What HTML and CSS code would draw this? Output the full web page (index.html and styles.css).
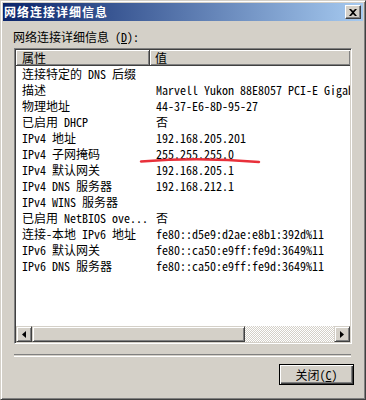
FILE: index.html
```html
<!DOCTYPE html>
<html lang="zh-CN">
<head>
    <meta charset="UTF-8">
    <title>网络连接详细信息</title>
    <link rel="stylesheet" href="styles.css">
</head>
<body>
    <div class="window">
        <div class="titlebar">
            <span class="title">网络连接详细信息</span>
            <button class="close-btn" title="关闭">
                <svg width="8" height="7" viewBox="0 0 8 7"><path d="M0 0h2l2 2 2-2h2L5 3.5 8 7H6L4 5 2 7H0l3-3.5z" fill="#000"/></svg>
            </button>
        </div>

        <div class="content">
            <div class="caption">网络连接详细信息 (<u>D</u>):</div>

            <div class="listview">
                <div class="lv-header">
                    <div class="hcell col-name">属性</div>
                    <div class="hcell col-value">值</div>
                </div>
                <div class="lv-body">
                    <div class="row"><span class="col-name">连接特定的 DNS 后缀</span><span class="col-value"></span></div>
                    <div class="row"><span class="col-name">描述</span><span class="col-value">Marvell Yukon 88E8057 PCI-E Gigabit Ethernet Controller</span></div>
                    <div class="row"><span class="col-name">物理地址</span><span class="col-value">44-37-E6-8D-95-27</span></div>
                    <div class="row"><span class="col-name">已启用 DHCP</span><span class="col-value">否</span></div>
                    <div class="row"><span class="col-name">IPv4 地址</span><span class="col-value">192.168.205.201</span></div>
                    <div class="row"><span class="col-name">IPv4 子网掩码</span><span class="col-value">255.255.255.0</span></div>
                    <div class="row"><span class="col-name">IPv4 默认网关</span><span class="col-value">192.168.205.1</span></div>
                    <div class="row"><span class="col-name">IPv4 DNS 服务器</span><span class="col-value">192.168.212.1</span></div>
                    <div class="row"><span class="col-name">IPv4 WINS 服务器</span><span class="col-value"></span></div>
                    <div class="row"><span class="col-name">已启用 NetBIOS ove...</span><span class="col-value">否</span></div>
                    <div class="row"><span class="col-name">连接-本地 IPv6 地址</span><span class="col-value">fe80::d5e9:d2ae:e8b1:392d%11</span></div>
                    <div class="row"><span class="col-name">IPv6 默认网关</span><span class="col-value">fe80::ca50:e9ff:fe9d:3649%11</span></div>
                    <div class="row"><span class="col-name">IPv6 DNS 服务器</span><span class="col-value">fe80::ca50:e9ff:fe9d:3649%11</span></div>
                </div>
                <div class="hscroll">
                    <div class="sb-btn">
                        <svg width="4" height="7" viewBox="0 0 4 7"><path d="M4 0v7L0 3.5z" fill="#000"/></svg>
                    </div>
                    <div class="sb-thumb"></div>
                    <div class="sb-track"></div>
                    <div class="sb-btn">
                        <svg width="4" height="7" viewBox="0 0 4 7"><path d="M0 0v7l4-3.5z" fill="#000"/></svg>
                    </div>
                </div>
            </div>

            <div class="separator"></div>

            <div class="footer">
                <button class="btn default">关闭(<u>C</u>)</button>
            </div>
        </div>

        <!-- hand drawn highlight under the subnet mask -->
        <svg class="mark" width="130" height="12" viewBox="0 0 130 12">
            <path d="M2 7.5 Q 60 3 120 8" stroke="#e8303a" stroke-width="2.5" fill="none" stroke-linecap="round"/>
        </svg>
    </div>
</body>
</html>
```

FILE: styles.css
```css
body {
    margin: 0;
    font-family: "Noto Sans Mono CJK SC", "Liberation Mono", "Noto Sans CJK SC", monospace;
    font-size: 12px;
    color: #000;
}
.window {
    position: relative;
    width: 366px;
    height: 400px;
    box-sizing: border-box;
    background-color: #d4d0c8;
    border: 1px solid;
    border-color: #d4d0c8 #404040 #404040 #d4d0c8;
    box-shadow: inset 1px 1px #fff, inset -1px -1px #808080;
    padding: 2px;
    display: flex;
    flex-direction: column;
}
.titlebar {
    height: 18px;
    display: flex;
    align-items: center;
    justify-content: space-between;
    padding: 0 2px 0 1px;
    background: linear-gradient(to right, #0a246a, #a6caf0);
}
.title {
    color: #fff;
    font-weight: bold;
    letter-spacing: 1px;
    line-height: 16px;
}
.close-btn {
    width: 16px;
    height: 14px;
    padding: 0;
    background-color: #d4d0c8;
    border: 1px solid;
    border-color: #fff #404040 #404040 #fff;
    box-shadow: inset -1px -1px #808080;
    display: flex;
    align-items: center;
    justify-content: center;
}
.content {
    flex: 1;
    padding: 0 11px;
    display: flex;
    flex-direction: column;
}
.caption {
    padding: 8px 0 3px;
    margin-left: -1px;
    line-height: 16px;
}
.listview {
    height: 296px;
    box-sizing: border-box;
    border: 1px solid;
    border-color: #808080 #fff #fff #808080;
    box-shadow: inset 1px 1px #404040, inset -1px -1px #d4d0c8;
    padding: 1px;
    background-color: #fff;
    display: flex;
    flex-direction: column;
    overflow: hidden;
}
.lv-header {
    display: flex;
    height: 16px;
    flex-shrink: 0;
}
.hcell {
    box-sizing: border-box;
    background-color: #d4d0c8;
    border-right: 1px solid #404040;
    border-bottom: 1px solid #404040;
    box-shadow: inset 1px 1px #fff, inset -1px -1px #808080;
    line-height: 15px;
}
.lv-header .col-value {
    flex: 1;
    border-right: none;
    padding-left: 5px;
}
.col-name {
    width: 134px;
    flex-shrink: 0;
    padding-left: 6px;
    box-sizing: border-box;
    white-space: nowrap;
    overflow: hidden;
}
.col-value {
    padding-left: 6px;
    white-space: nowrap;
    overflow: hidden;
}
.lv-body {
    flex: 1;
}
.row {
    display: flex;
    height: 16px;
    line-height: 16px;
}
.hscroll {
    height: 16px;
    display: flex;
    flex-shrink: 0;
}
.sb-btn, .sb-thumb {
    box-sizing: border-box;
    background-color: #d4d0c8;
    border: 1px solid;
    border-color: #d4d0c8 #404040 #404040 #d4d0c8;
    box-shadow: inset 1px 1px #fff, inset -1px -1px #808080;
}
.sb-btn {
    width: 16px;
    display: flex;
    align-items: center;
    justify-content: center;
}
.sb-thumb {
    width: 213px;
}
.sb-track {
    flex: 1;
    background: repeating-conic-gradient(#fff 0 25%, #d4d0c8 0 50%) 0 0 / 2px 2px;
}
.separator {
    margin-top: 10px;
    height: 1px;
    border-top: 1px solid #808080;
    border-bottom: 1px solid #fff;
    margin-right: 1px;
}
.footer {
    display: flex;
    justify-content: flex-end;
    padding-top: 7px;
    margin-right: -2px;
}
.btn {
    width: 75px;
    height: 21px;
    font-family: inherit;
    font-size: 12px;
    background-color: #d4d0c8;
    border: 1px solid #000;
    box-shadow: inset 1px 1px #fff, inset -1px -1px #404040, inset -2px -2px #808080;
    padding: 0;
}
.mark {
    position: absolute;
    left: 138px;
    top: 153px;
}
```
